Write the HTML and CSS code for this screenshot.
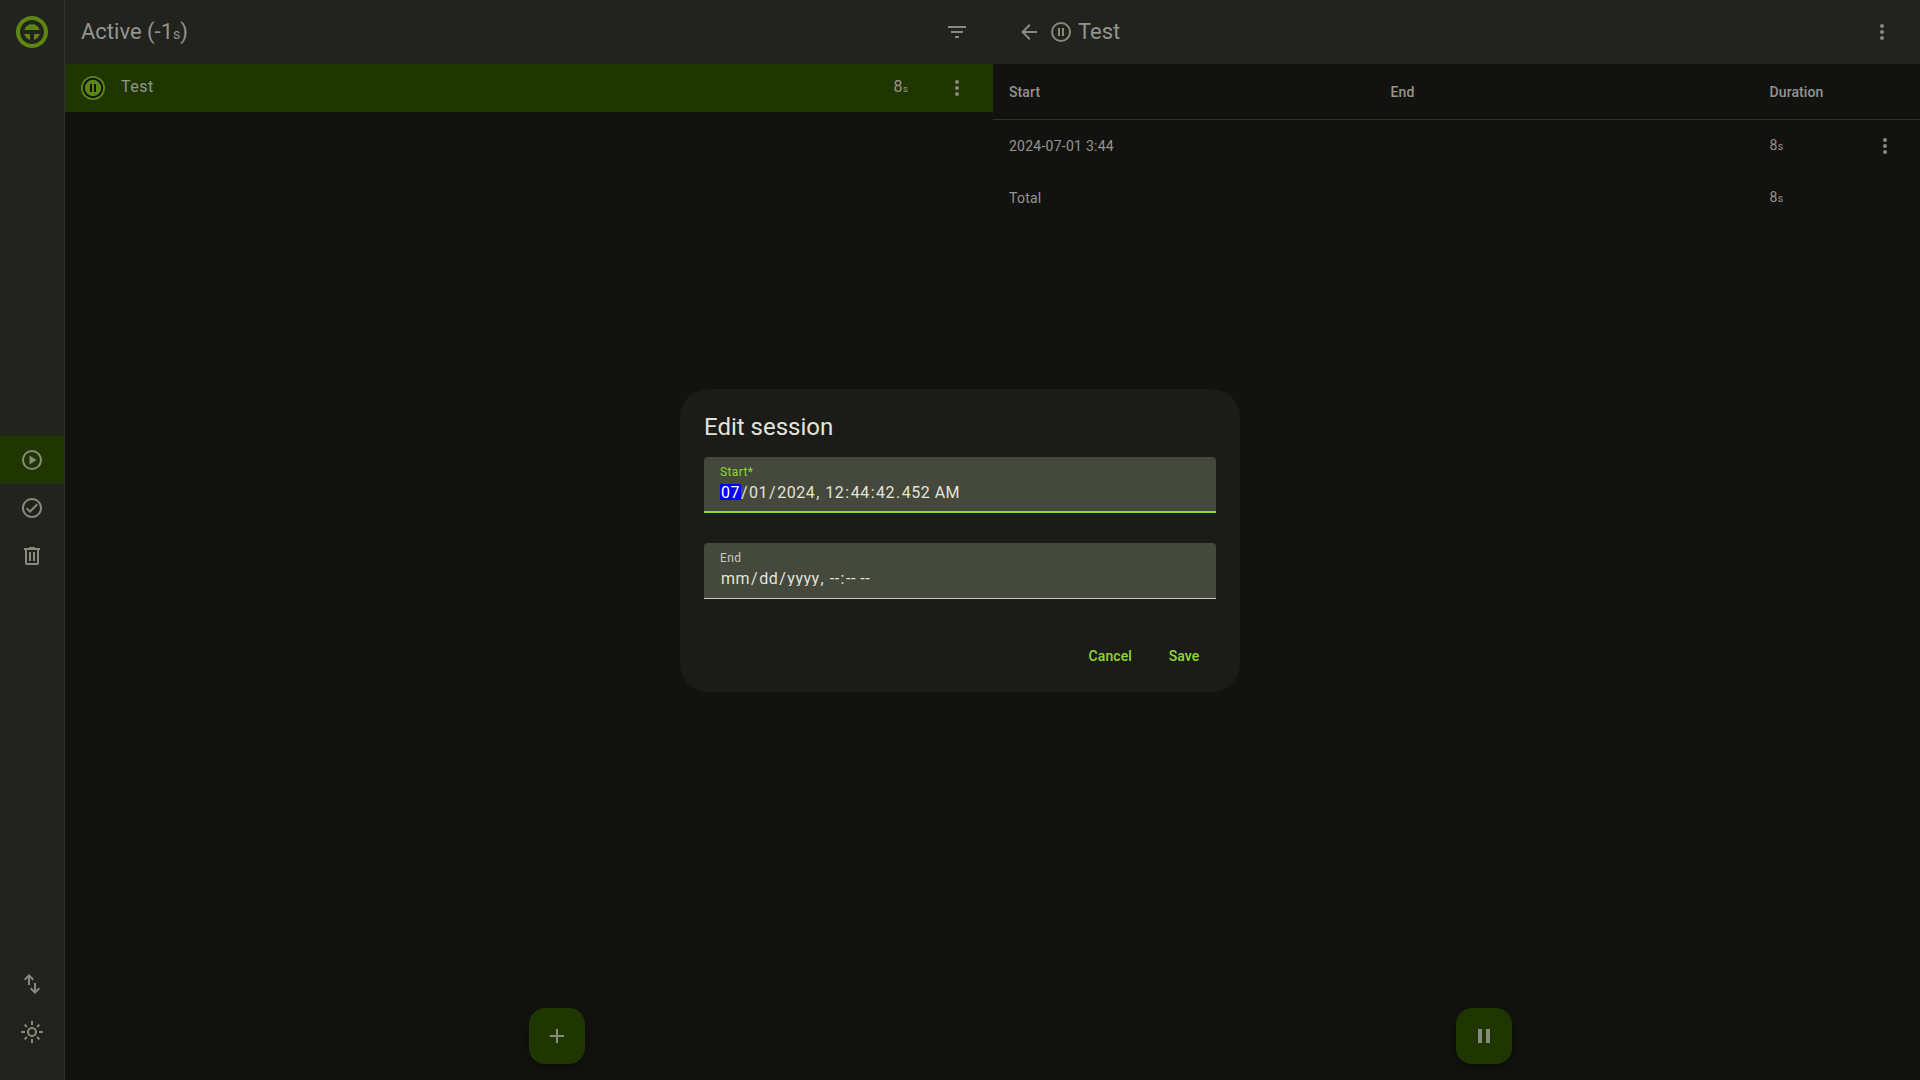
FILE: index.html
```html
<!DOCTYPE html>
<html lang="en">
<head>
<meta charset="utf-8">
<title>Active</title>
<link rel="stylesheet" href="styles.css">
</head>
<body>
<div class="app">
  <nav class="rail">
    <div class="logo">
      <svg width="32" height="32" viewBox="0 0 32 32"><circle cx="16" cy="16" r="14" fill="none" stroke="#5b8611" stroke-width="4"/><path d="M8.300 14a8 8 0 0 1 15.400 0zM8.300 18H14V23.800A8 8 0 0 1 8.300 18zM18 18h5.700A8 8 0 0 1 18 23.800z" fill="#5b8611"/></svg>
    </div>
    <div class="rail-group rail-main">
      <a class="rail-item active"><svg class="icon" viewBox="0 0 24 24"><path d="M12 20c-4.410 0-8-3.590-8-8s3.590-8 8-8 8 3.590 8 8-3.590 8-8 8m0-18A10 10 0 0 0 2 12a10 10 0 0 0 10 10 10 10 0 0 0 10-10A10 10 0 0 0 12 2M9.500 16.500l7-4.500-7-4.500z"/></svg></a>
      <a class="rail-item"><svg class="icon" viewBox="0 0 24 24"><path d="M12 2C6.500 2 2 6.500 2 12s4.500 10 10 10 10-4.500 10-10S17.500 2 12 2m0 18c-4.410 0-8-3.590-8-8s3.590-8 8-8 8 3.590 8 8-3.590 8-8 8m4.590-12.420L10 14.170l-2.590-2.580L6 13l4 4 8-8z"/></svg></a>
      <a class="rail-item"><svg class="icon" viewBox="0 0 24 24"><path d="M9 3v1H4v2h1v13a2 2 0 0 0 2 2h10a2 2 0 0 0 2-2V6h1V4h-5V3H9M7 6h10v13H7V6m2 2v9h2V8H9m4 0v9h2V8h-2z"/></svg></a>
    </div>
    <div class="rail-group">
      <a class="rail-item"><svg class="icon" viewBox="0 0 24 24"><path d="M9 13V3.400M4.700 7.700L9 3.400l4.300 4.300M15 11v9.600M10.700 16.300l4.300 4.300 4.300-4.300" fill="none" stroke="currentColor" stroke-width="2"/></svg></a>
      <a class="rail-item"><svg class="icon" viewBox="0 0 24 24"><g fill="none" stroke="currentColor" stroke-width="2"><circle cx="12" cy="12" r="4"/><path d="M12 1v4M12 19v4M1 12h4M19 12h4M4.600 4.600l2.400 2.400M17 17l2.400 2.400M4.600 19.400L7 17M17 7l2.400-2.400"/></g></svg></a>
    </div>
  </nav>

  <main class="pane list-pane">
    <header class="toolbar">
      <h1 class="title list-title">Active (-1<small>s</small>)</h1>
      <svg class="icon toolbar-end" viewBox="0 0 24 24"><path d="M3 6h18v2H3zM6 11h12v2H6zM10 16h4v2h-4z"/></svg>
    </header>
    <div class="task">
      <svg class="task-icon" width="24" height="24" viewBox="0 0 24 24"><circle cx="12" cy="12" r="12" fill="#5b8611"/><circle cx="12" cy="12" r="9.200" fill="none" stroke="#121310" stroke-width="2"/><path d="M9 8h2v8H9zM13 8h2v8h-2z" fill="#121310"/></svg>
      <span class="task-name">Test</span>
      <span class="task-time">8<small>s</small></span>
      <svg class="icon" viewBox="0 0 24 24"><circle cx="12" cy="6" r="2"/><circle cx="12" cy="12" r="2"/><circle cx="12" cy="18" r="2"/></svg>
    </div>
    <button class="fab"><svg class="icon" viewBox="0 0 24 24"><path d="M19 13h-6v6h-2v-6H5v-2h6V5h2v6h6z"/></svg></button>
  </main>

  <section class="pane detail-pane">
    <header class="toolbar detail-toolbar">
      <svg class="icon" viewBox="0 0 24 24"><path d="M20 11v2H8l5.500 5.500-1.420 1.420L4.160 12l7.920-7.920L13.500 5.500 8 11z"/></svg>
      <svg class="icon state-icon" viewBox="0 0 24 24"><circle cx="12" cy="12" r="9" fill="none" stroke="currentColor" stroke-width="2"/><path d="M9 8h2v8H9zM13 8h2v8h-2z"/></svg>
      <h1 class="title">Test</h1>
      <svg class="icon toolbar-end" viewBox="0 0 24 24"><circle cx="12" cy="6" r="2"/><circle cx="12" cy="12" r="2"/><circle cx="12" cy="18" r="2"/></svg>
    </header>
    <div class="table">
      <div class="row head"><span>Start</span><span>End</span><span>Duration</span></div>
      <div class="row"><span>2024-07-01 3:44</span><span></span><span class="duration">8<small>s</small></span><svg class="icon" viewBox="0 0 24 24"><circle cx="12" cy="6" r="2"/><circle cx="12" cy="12" r="2"/><circle cx="12" cy="18" r="2"/></svg></div>
      <div class="row"><span>Total</span><span></span><span class="duration">8<small>s</small></span></div>
    </div>
    <button class="fab"><svg class="icon" viewBox="0 0 24 24"><path d="M6 5h4v14H6zM14 5h4v14h-4z"/></svg></button>
  </section>
</div>

<div class="overlay">
  <form class="dialog">
    <h2 class="dialog-title">Edit session</h2>
    <div class="field focused">
      <span class="label">Start*</span>
      <div class="value"><span class="part selected">07</span>/<span class="part">01</span>/<span class="part">2024</span>, <span class="part">12</span>:<span class="part">44</span>:<span class="part">42</span>.<span class="part">452</span> <span class="part meridiem">AM</span></div>
    </div>
    <div class="field">
      <span class="label">End</span>
      <div class="value empty"><span class="part">mm</span>/<span class="part">dd</span>/<span class="part">yyyy</span>, <span class="part">--</span>:<span class="part">--</span> <span class="part meridiem">--</span></div>
    </div>
    <div class="actions"><button type="button" class="action">Cancel</button><button type="button" class="action">Save</button></div>
  </form>
</div>
</body>
</html>
```
FILE: styles.css
```css
* { box-sizing: border-box; }
body {
  margin: 0;
  font-family: Roboto, sans-serif;
  background: #121310;
  color: #94948f;
  overflow: hidden;
}
button { border: 0; background: none; font: inherit; color: inherit; padding: 0; }
.app { display: grid; grid-template-columns: 65px 928px 1fr; height: 100vh; }
.icon { width: 24px; height: 24px; fill: currentColor; color: #888a7e; flex: none; display: block; }

.rail {
  display: flex;
  flex-direction: column;
  background: #22231e;
  border-right: 1px solid #30312d;
  padding-bottom: 24px;
}
.logo { height: 64px; display: grid; place-items: center; }
.rail-main { flex: 1; display: flex; flex-direction: column; justify-content: center; padding-bottom: 8px; }
.rail-item { display: grid; place-items: center; height: 48px; }
.rail-item.active { background: #203600; }

.pane { display: flex; flex-direction: column; min-width: 0; }
.toolbar { display: flex; align-items: center; height: 64px; padding: 0 24px 0 16px; background: #22231e; flex: none; }
.detail-toolbar { padding: 0 26px 0 24px; }
.toolbar-end { margin-left: auto; }
.title { margin: 0; font-size: 22px; line-height: 28px; font-weight: 400; }
.list-title { padding-top: 2px; }
.title small { font-size: 14px; }
.state-icon { margin: 0 5px 0 8px; }

.task { display: flex; align-items: center; height: 48px; padding: 0 24px 0 16px; background: #203600; }
.task-name, .task-time { font-size: 16px; line-height: 24px; letter-spacing: .5px; margin-bottom: 2px; }
.task-name { margin-left: 16px; }
.task-time { margin-left: auto; margin-right: 36.500px; padding-top: 1px; }
.task-time small { font-size: 9.600px; }

.fab {
  display: grid;
  place-items: center;
  width: 56px;
  height: 56px;
  margin: auto 0 16px 50%;
  border-radius: 16px;
  background: #203600;
  box-shadow: 0 3px 5px rgba(0,0,0,.14), 0 4px 10px rgba(0,0,0,.2);
}
.detail-pane .fab { margin-left: calc(50% - .5px); }

.row {
  display: grid;
  grid-template-columns: 381.500px 379px 103px 24px;
  align-items: center;
  height: 52px;
  padding-left: 16px;
  font-size: 14px;
  line-height: 20px;
  letter-spacing: .25px;
}
.head { height: 56px; border-bottom: 1px solid #30312d; font-weight: 500; letter-spacing: .1px; }
.duration small { font-size: 10.500px; }

.overlay { position: fixed; inset: 0; display: grid; place-items: center; }
.dialog { width: 560px; height: 303px; padding: 22px 24px 16px; border-radius: 28px; background: #1b1c18; color: #e4e3db; }
.dialog-title { margin: 0 0 14px; font-size: 24px; line-height: 32px; font-weight: 400; }
.field {
  height: 56px;
  margin-bottom: 30px;
  padding: 7px 16px 0;
  border-radius: 4px 4px 0 0;
  border-bottom: 1px solid #c6c8b9;
  background: #45483d;
}
.focused { border-bottom: 2px solid #8bd932; }
.label { display: block; font-size: 12px; line-height: 16px; letter-spacing: .4px; color: #c6c8b9; }
.focused .label { color: #8bd932; }
.value { height: 16px; font-size: 16px; line-height: 18px; letter-spacing: .5px; margin-top: 4px; white-space: pre; }
.empty { overflow: hidden; }
.part { display: inline-block; padding: 0 1px; }
.meridiem { margin-left: -2px; }
.selected { background: linear-gradient(#00f, #00f) 0 0 / 100% 16px no-repeat; color: #fff; }
.actions { display: flex; justify-content: flex-end; gap: 8px; margin-top: 37px; }
.action { height: 40px; min-width: 64px; padding: 0 12px; font-size: 14px; font-weight: 500; letter-spacing: .1px; color: #8bd932; }
```
